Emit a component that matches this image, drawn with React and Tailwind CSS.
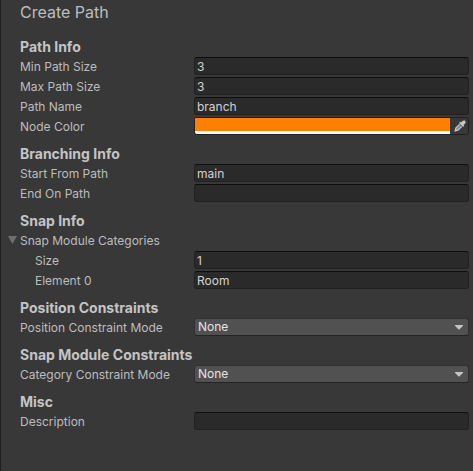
import { useState } from "react";

const fieldClass =
  "block h-[18px] w-full min-w-0 rounded-[3px] border border-[#212121] border-t-[#0d0d0d] bg-[#2a2a2a] px-[2px] text-[12px] leading-4 text-[#d2d2d2] outline-none focus:border-[#3a79bb]";

function Section({ title, children }) {
  return (
    <section>
      <h2 className="h-[29px] pt-[9px] text-[14px] leading-5 font-bold whitespace-nowrap text-[#c4c4c4]">
        {title}
      </h2>
      <div className="flex flex-col gap-[2px]">{children}</div>
    </section>
  );
}

function Row({ id, label, indent = false, children }) {
  return (
    <div className="grid grid-cols-[174px_minmax(0,1fr)]">
      <label
        htmlFor={id}
        className={`h-[18px] text-[12px] leading-5 whitespace-nowrap ${indent ? "pl-[15px]" : ""}`}
      >
        {label}
      </label>
      {children}
    </div>
  );
}

function TextRow({ id, label, value = "", indent }) {
  const [text, setText] = useState(value);
  return (
    <Row id={id} label={label} indent={indent}>
      <input id={id} type="text" value={text} onChange={(e) => setText(e.target.value)} className={fieldClass} />
    </Row>
  );
}

function SelectRow({ id, label }) {
  return (
    <Row id={id} label={label}>
      <div className="relative">
        <select
          id={id}
          className="block h-[18px] w-full appearance-none rounded-[3px] border border-[#303030] border-b-[#242424] bg-[#515151] pr-5 pl-[3px] text-[12px] leading-4 text-[#e4e4e4] outline-none"
        >
          <option>None</option>
        </select>
        <svg
          className="pointer-events-none absolute top-[7px] right-[6px] h-[5px] w-2"
          viewBox="0 0 8 5"
          fill="#c4c4c4"
          aria-hidden="true"
        >
          <path d="M0 0h8v.8L4.4 4.6h-.8L0 .8z" />
        </svg>
      </div>
    </Row>
  );
}

function ColorRow() {
  const [color, setColor] = useState("#ff8000");
  return (
    <Row id="node-color" label="Node Color">
      <div className="flex h-[18px] overflow-hidden rounded-[3px] border border-[#202020] bg-[#383838]">
        <div className="flex flex-1 flex-col bg-white">
          <input
            id="node-color"
            type="color"
            value={color}
            onChange={(e) => setColor(e.target.value)}
            className="block h-[13px] w-full appearance-none border-0 bg-transparent p-0 [&::-webkit-color-swatch]:rounded-none [&::-webkit-color-swatch]:border-0 [&::-webkit-color-swatch-wrapper]:p-0"
          />
        </div>
        <button type="button" aria-label="Pick color" className="flex w-[18px] items-center justify-end pr-[2px]">
          <svg className="h-3 w-3" viewBox="0 0 12 12" aria-hidden="true">
            <path d="M8 1.500C9 .3 10.500.2 11.200.9s.6 2.100-.6 3.100L9.500 5l.8.8-1.200 1.200L5 2.900l1.200-1.200.8.8z" fill="#c8c8c8" />
            <path d="M5.500 4.300 1.800 8 1.300 10.700 4 10.200 7.700 6.500" fill="#858585" stroke="#c4c4c4" strokeWidth="1.200" />
            <path d="M.5 11.500 1.200 8.300l2.500 2.500z" fill="#c4c4c4" />
          </svg>
        </button>
      </div>
    </Row>
  );
}

export default function App() {
  const [open, setOpen] = useState(true);
  return (
    <main className="min-h-screen border-l border-[#1f1f1f] bg-[#383838] pr-1 pl-[19px] font-[Inter,sans-serif] text-[#bdbdbd]">
      <h1 className="h-7 text-[16px] leading-6">Create Path</h1>

      <Section title="Path Info">
        <TextRow id="min-path-size" label="Min Path Size" value="3" />
        <TextRow id="max-path-size" label="Max Path Size" value="3" />
        <TextRow id="path-name" label="Path Name" value="branch" />
        <ColorRow />
      </Section>

      <Section title="Branching Info">
        <TextRow id="start-from-path" label="Start From Path" value="main" />
        <TextRow id="end-on-path" label="End On Path" />
      </Section>

      <Section title="Snap Info">
        <button
          type="button"
          aria-expanded={open}
          onClick={() => setOpen(!open)}
          className="-ml-3 flex h-[18px] items-center gap-[3px] text-left text-[12px] leading-5 whitespace-nowrap"
        >
          <svg className={`h-2 w-[9px] ${open ? "" : "-rotate-90"}`} viewBox="0 0 9 8" fill="#6e6e6e" aria-hidden="true">
            <path d="M0 0h9L4.500 8z" />
          </svg>
          <span className="pt-px">Snap Module Categories</span>
        </button>
        {open && (
          <>
            <TextRow id="categories-size" label="Size" value="1" indent />
            <TextRow id="categories-element-0" label="Element 0" value="Room" indent />
          </>
        )}
      </Section>

      <Section title="Position Constraints">
        <SelectRow id="position-constraint-mode" label="Position Constraint Mode" />
      </Section>

      <Section title="Snap Module Constraints">
        <SelectRow id="category-constraint-mode" label="Category Constraint Mode" />
      </Section>

      <Section title="Misc">
        <TextRow id="description" label="Description" />
      </Section>
    </main>
  );
}
